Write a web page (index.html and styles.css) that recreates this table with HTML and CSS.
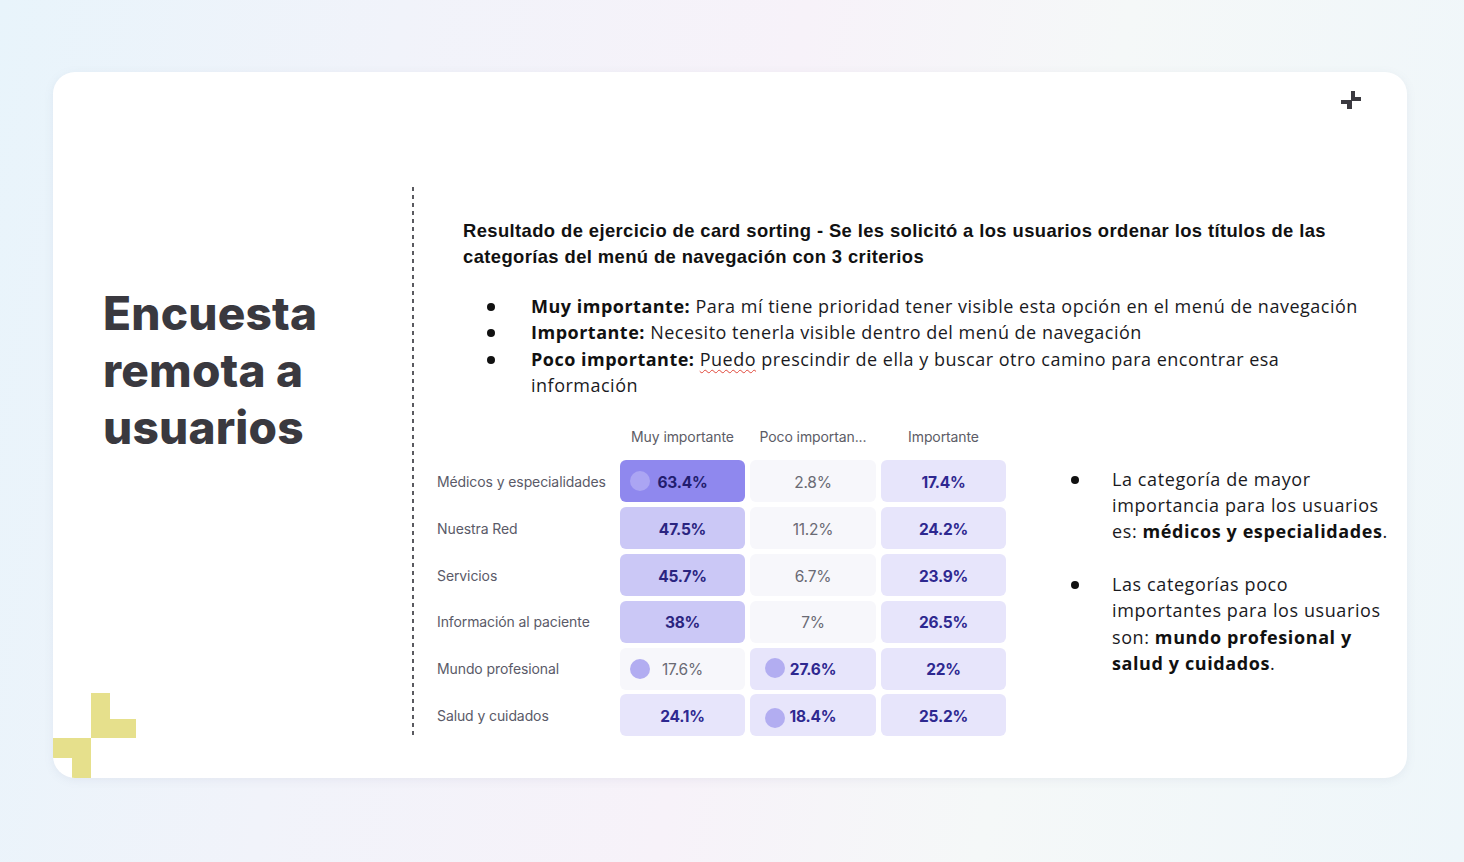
FILE: index.html
```html
<!DOCTYPE html>
<html lang="es">
<head>
<meta charset="utf-8">
<title>Encuesta remota a usuarios</title>
<link rel="stylesheet" href="styles.css">
</head>
<body>
<div class="page">
  <section class="card">
    <svg class="plus" width="20" height="20" viewBox="0 0 20 20" aria-hidden="true">
      <rect x="10" y="0" width="4" height="10" fill="#3b3a40"/>
      <rect x="10" y="6" width="10" height="4" fill="#3b3a40"/>
      <rect x="0" y="9" width="11" height="4" fill="#3b3a40"/>
      <rect x="6" y="9" width="5" height="9" fill="#3b3a40"/>
    </svg>
    <div class="deco" aria-hidden="true">
      <span class="d1"></span><span class="d2"></span><span class="d3"></span><span class="d4"></span>
    </div>
    <div class="layout">
      <div class="left">
        <h1 class="title">Encuesta<br>remota a<br>usuarios</h1>
      </div>
      <div class="divider"></div>
      <div class="right">
        <p class="lead">Resultado de ejercicio de card sorting - Se les solicitó a los usuarios ordenar los títulos de las categorías del menú de navegación con 3 criterios</p>
        <ul class="criteria">
          <li><b>Muy importante:</b> Para mí tiene prioridad tener visible esta opción en el menú de navegación</li>
          <li><b>Importante:</b> Necesito tenerla visible dentro del menú de navegación</li>
          <li><b>Poco importante:</b> <span class="spell">Puedo</span> prescindir de ella y buscar otro camino para encontrar esa información</li>
        </ul>
        <div class="bottom">
          <div class="table">
            <div class="th"></div>
            <div class="th">Muy importante</div>
            <div class="th">Poco importan...</div>
            <div class="th">Importante</div>

            <div class="label">Médicos y especialidades</div>
            <div class="cell c4"><span class="dot dot-light"></span>63.4%</div>
            <div class="cell c1">2.8%</div>
            <div class="cell c2">17.4%</div>

            <div class="label">Nuestra Red</div>
            <div class="cell c3">47.5%</div>
            <div class="cell c1">11.2%</div>
            <div class="cell c2">24.2%</div>

            <div class="label">Servicios</div>
            <div class="cell c3">45.7%</div>
            <div class="cell c1">6.7%</div>
            <div class="cell c2">23.9%</div>

            <div class="label">Información al paciente</div>
            <div class="cell c3">38%</div>
            <div class="cell c1">7%</div>
            <div class="cell c2">26.5%</div>

            <div class="label">Mundo profesional</div>
            <div class="cell c1"><span class="dot"></span>17.6%</div>
            <div class="cell c2"><span class="dot dot-up"></span>27.6%</div>
            <div class="cell c2">22%</div>

            <div class="label">Salud y cuidados</div>
            <div class="cell c2">24.1%</div>
            <div class="cell c2"><span class="dot dot-down"></span>18.4%</div>
            <div class="cell c2">25.2%</div>
          </div>
          <ul class="notes">
            <li>La categoría de mayor importancia para los usuarios es: <b>médicos y especialidades</b>.</li>
            <li>Las categorías poco importantes para los usuarios son: <b>mundo profesional y salud y cuidados</b>.</li>
          </ul>
        </div>
      </div>
    </div>
  </section>
</div>
</body>
</html>
```

FILE: styles.css
```css
* { box-sizing: border-box; }
html, body { margin: 0; padding: 0; }
body {
  width: 1464px;
  height: 862px;
  overflow: hidden;
  background: linear-gradient(100deg, #e8f4fb 0%, #f1f3fa 25%, #f7f2f9 50%, #f5f8f8 70%, #eef6fa 100%);
  font-family: "Open Sans", "Liberation Sans", sans-serif;
  color: #1b1b1f;
}
.page {
  padding: 72px 57px 84px 53px;
}
.card {
  position: relative;
  height: 706px;
  background: #ffffff;
  border-radius: 22px;
  overflow: hidden;
  box-shadow: 0 2px 10px rgba(120, 130, 160, 0.10);
}
.plus {
  position: absolute;
  top: 19px;
  right: 46px;
}
.deco {
  position: absolute;
  left: 0;
  top: 621px;
  width: 84px;
  height: 85px;
}
.deco span { position: absolute; background: #e6e08c; }
.deco .d1 { left: 38px; top: 0; width: 19px; height: 45px; }
.deco .d2 { left: 57px; top: 26px; width: 26px; height: 19px; }
.deco .d3 { left: 0; top: 45px; width: 38px; height: 20px; }
.deco .d4 { left: 19px; top: 45px; width: 19px; height: 40px; }

.layout {
  display: flex;
  padding-top: 115px;
  height: 100%;
  padding-bottom: 42px;
}
.left {
  width: 359px;
  padding-left: 50px;
  padding-top: 98px;
}
.title {
  margin: 0;
  font-family: "Inter", "Liberation Sans", sans-serif;
  font-weight: 800;
  font-size: 46px;
  line-height: 57px;
  color: #3a393f;
  letter-spacing: 0.2px;
}
.divider {
  width: 2px;
  background: repeating-linear-gradient(to bottom, #5a5a60 0 4px, transparent 4px 8px);
}
.right {
  flex: 1;
  padding-left: 23px;
  padding-top: 31px;
}
.lead {
  margin: 0 0 0 26px;
  font-family: "Liberation Sans", "Roboto", sans-serif;
  font-weight: 700;
  font-size: 18.4px;
  line-height: 26px;
  letter-spacing: 0.4px;
  width: 890px;
  color: #111;
}
.criteria {
  margin: 23px 0 0 26px;
  padding: 0 0 0 68px;
  list-style: none;
  font-size: 18px;
  line-height: 26.4px;
  letter-spacing: 0.5px;
  width: 912px;
  color: #1a1a1e;
}
.criteria li, .notes li { position: relative; }
.criteria li::before, .notes li::before {
  content: "";
  position: absolute;
  width: 8px;
  height: 8px;
  border-radius: 50%;
  background: #111;
  top: 10px;
}
.criteria li::before { left: -44px; }
.criteria b, .notes b { font-weight: 700; color: #111; }
.spell {
  text-decoration: underline wavy #e0473a;
  text-decoration-thickness: 1px;
  text-underline-offset: 3px;
}
.bottom {
  display: flex;
  margin-top: 27px;
}
.table {
  display: grid;
  grid-template-columns: 178px 125px 126px 125px;
  grid-template-rows: 30px repeat(6, 42px);
  column-gap: 5px;
  row-gap: 4.8px;
  font-family: "Inter", "Liberation Sans", sans-serif;
  font-size: 14px;
  flex: none;
}
.th {
  color: #5c5c66;
  text-align: center;
  line-height: 22px;
  align-self: start;
  letter-spacing: -0.1px;
}
.label {
  color: #5a5a68;
  display: flex;
  align-items: center;
  letter-spacing: -0.1px;
  white-space: nowrap;
}
.cell {
  position: relative;
  border-radius: 6px;
  display: flex;
  align-items: center;
  justify-content: center;
  font-size: 15.5px;
  padding-top: 2px;
  letter-spacing: -0.2px;
}
.c1 { background: #f7f7fb; color: #6a6a74; }
.c2 { background: #e7e5fb; color: #2e2890; font-weight: 700; }
.c3 { background: #cbc8f6; color: #2a2480; font-weight: 700; }
.c4 { background: #8f88ee; color: #221d6e; font-weight: 700; }
.dot {
  position: absolute;
  left: 10px;
  top: 11px;
  width: 20px;
  height: 20px;
  border-radius: 50%;
  background: #b2adf1;
}
.dot-light { background: #aba5f3; }
.dot-up { left: 15px; top: 10px; }
.dot-down { left: 15px; top: 14px; }
.notes {
  list-style: none;
  margin: 40px 0 0 65px;
  padding: 0 0 0 41px;
  width: 330px;
  font-size: 18px;
  line-height: 26.2px;
  letter-spacing: 0.6px;
  color: #1a1a1e;
}
.notes li + li { margin-top: 27px; }
.notes li::before { left: -41px; }
```
